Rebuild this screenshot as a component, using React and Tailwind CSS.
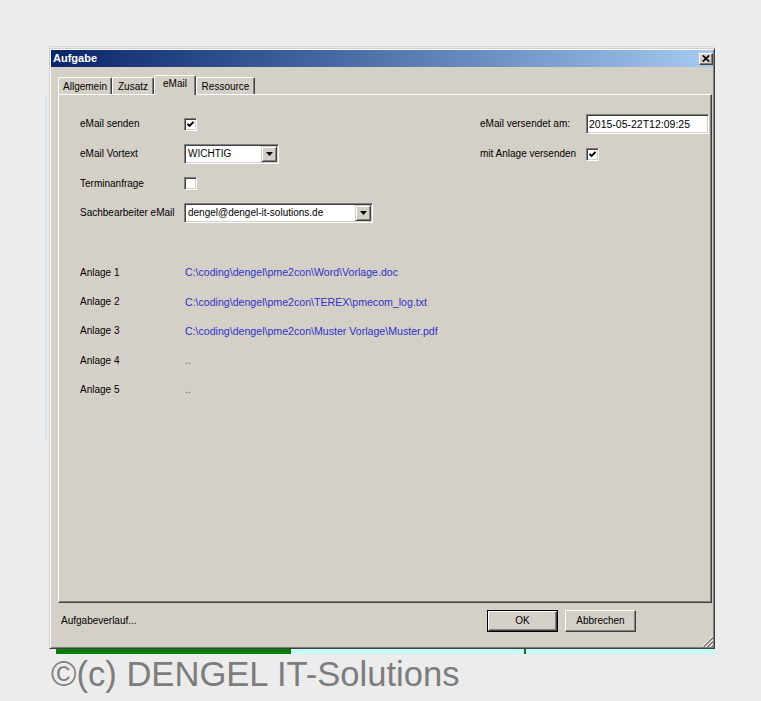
import React from "react";

function Check() {
  return (
    <svg width="7" height="7" viewBox="0 0 7 7">
      <path d="M0.5 2.8 L2.5 4.8 L6.5 0.8" stroke="black" strokeWidth="1.9" fill="none" />
    </svg>
  );
}

function Checkbox({ checked }) {
  return (
    <div className="w-[13px] h-[13px] shrink-0 bg-white border border-t-[#808080] border-l-[#808080] border-r-white border-b-white shadow-[inset_1px_1px_0_#404040,inset_-1px_-1px_0_#d4d0c8] flex items-center justify-center">
      {checked ? <Check /> : null}
    </div>
  );
}

function Arrow() {
  return (
    <svg width="7" height="4" viewBox="0 0 7 4">
      <path d="M0 0 H7 L3.5 4 Z" fill="black" />
    </svg>
  );
}

function Select({ value, width }) {
  return (
    <div
      className={`${width} h-[20px] shrink-0 bg-white border border-t-[#808080] border-l-[#808080] border-r-white border-b-white shadow-[inset_1px_1px_0_#404040,inset_-1px_-1px_0_#d4d0c8] p-px flex`}
    >
      <div className="flex-1 flex items-center pl-[2px] text-[10px] leading-none whitespace-nowrap overflow-hidden">
        {value}
      </div>
      <div className="w-[16px] h-full bg-[#d4d0c8] border border-t-[#d4d0c8] border-l-[#d4d0c8] border-r-[#404040] border-b-[#404040] shadow-[inset_1px_1px_0_#fff,inset_-1px_-1px_0_#808080] flex items-center justify-center">
        <Arrow />
      </div>
    </div>
  );
}

function Tab({ label, width, selected }) {
  if (selected) {
    return (
      <div
        className={`${width} h-[20px] relative z-10 bg-[#d4d0c8] border-t border-l border-t-white border-l-white border-r border-r-[#404040] rounded-t-[2px] shadow-[inset_-1px_0_0_#808080] flex items-center justify-center pb-[4px] text-[10px] leading-none`}
      >
        {label}
      </div>
    );
  }
  return (
    <div
      className={`${width} h-[18px] bg-[#d4d0c8] border-t border-l border-t-white border-l-white border-r border-r-[#404040] rounded-t-[2px] shadow-[inset_-1px_0_0_#808080] flex items-center justify-center text-[10px] leading-none`}
    >
      {label}
    </div>
  );
}

function Button({ label, isDefault }) {
  const inner = (
    <div className="w-full h-full bg-[#d4d0c8] border border-t-white border-l-white border-r-[#404040] border-b-[#404040] shadow-[inset_-1px_-1px_0_#808080] flex items-center justify-center text-[10px] leading-none">
      {label}
    </div>
  );
  if (isDefault) {
    return <div className="w-[71px] h-[22px] border border-black">{inner}</div>;
  }
  return <div className="w-[71px] h-[22px]">{inner}</div>;
}

function Grip() {
  return (
    <svg width="11" height="11" viewBox="0 0 11 11">
      <line x1="11" y1="0" x2="0" y2="11" stroke="#ffffff" />
      <line x1="11" y1="1" x2="1" y2="11" stroke="#808080" />
      <line x1="11" y1="2" x2="2" y2="11" stroke="#808080" />
      <line x1="11" y1="4" x2="4" y2="11" stroke="#ffffff" />
      <line x1="11" y1="5" x2="5" y2="11" stroke="#808080" />
      <line x1="11" y1="6" x2="6" y2="11" stroke="#808080" />
      <line x1="11" y1="8" x2="8" y2="11" stroke="#ffffff" />
      <line x1="11" y1="9" x2="9" y2="11" stroke="#808080" />
      <line x1="11" y1="10" x2="10" y2="11" stroke="#808080" />
    </svg>
  );
}

const anlagen = [
  ["Anlage 1", "C:\\coding\\dengel\\pme2con\\Word\\Vorlage.doc", true],
  ["Anlage 2", "C:\\coding\\dengel\\pme2con\\TEREX\\pmecom_log.txt", true],
  ["Anlage 3", "C:\\coding\\dengel\\pme2con\\Muster Vorlage\\Muster.pdf", true],
  ["Anlage 4", "..", false],
  ["Anlage 5", "..", false],
];

function Dialog() {
  return (
    <div className="w-[666px] h-[601px] shrink-0 bg-[#d4d0c8] border border-t-[#d4d0c8] border-l-[#d4d0c8] border-r-[#404040] border-b-[#404040] shadow-[inset_1px_1px_0_#fff,inset_-1px_-1px_0_#808080] p-px flex flex-col">
      {/* Title bar */}
      <div className="h-[17px] shrink-0 flex items-center justify-between bg-linear-to-r from-[#0a246a] to-[#a6caf0] pl-[2px]">
        <span className="text-white font-bold text-[11px] leading-none">Aufgabe</span>
        <div className="w-[14px] h-[12px] bg-[#d4d0c8] border border-t-white border-l-white border-r-[#404040] border-b-[#404040] shadow-[inset_-1px_-1px_0_#808080] flex items-center justify-center">
          <svg width="8" height="7" viewBox="0 0 8 7">
            <path d="M0.8 0.5 L7.2 6.5 M7.2 0.5 L0.8 6.5" stroke="black" strokeWidth="1.7" />
          </svg>
        </div>
      </div>

      {/* Tabs */}
      <div className="mt-[8px] h-[20px] shrink-0 flex items-end pl-[7px]">
        <Tab label="Allgemein" width="w-[54px]" />
        <Tab label="Zusatz" width="w-[42px]" />
        <Tab label="eMail" width="w-[42px]" selected />
        <Tab label="Ressource" width="w-[59px]" />
      </div>

      {/* Panel */}
      <div className="-mt-px ml-[7px] w-[654px] h-[509px] shrink-0 border border-t-white border-l-white border-r-[#404040] border-b-[#404040] shadow-[inset_-1px_-1px_0_#808080] pt-[14px] pl-[21px] flex flex-col text-[10px] leading-none">
        <div className="h-[30px] flex items-center">
          <div className="w-[400px] flex items-center">
            <div className="w-[104px]">eMail senden</div>
            <Checkbox checked />
          </div>
          <div className="w-[106px]">eMail versendet am:</div>
          <div className="w-[123px] h-[20px] bg-white border border-t-[#808080] border-l-[#808080] border-r-white border-b-white shadow-[inset_1px_1px_0_#404040,inset_-1px_-1px_0_#d4d0c8] flex items-center pl-[2px] text-[10.5px] whitespace-nowrap">
            2015-05-22T12:09:25
          </div>
        </div>
        <div className="h-[30px] flex items-center">
          <div className="w-[400px] flex items-center">
            <div className="w-[104px]">eMail Vortext</div>
            <Select value="WICHTIG" width="w-[95px]" />
          </div>
          <div className="w-[106px]">mit Anlage versenden</div>
          <Checkbox checked />
        </div>
        <div className="h-[29px] flex items-center">
          <div className="w-[104px]">Terminanfrage</div>
          <Checkbox />
        </div>
        <div className="h-[29px] flex items-center">
          <div className="w-[104px] whitespace-nowrap">Sachbearbeiter eMail</div>
          <Select value="dengel@dengel-it-solutions.de" width="w-[189px]" />
        </div>

        <div className="mt-[31px] flex flex-col">
          {anlagen.map(([label, value, link]) => (
            <div key={label} className="h-[29.4px] flex items-center">
              <div className="w-[105px]">{label}</div>
              <div className={link ? "text-[#3030c8] text-[10.6px] whitespace-nowrap" : "text-[#50507a]"}>{value}</div>
            </div>
          ))}
        </div>
      </div>

      {/* Bottom */}
      <div className="flex-1 flex flex-col">
        <div className="pt-[7px] flex items-center pr-[77px]">
          <div className="pl-[10px] text-[10px] leading-none">Aufgabeverlauf...</div>
          <div className="ml-auto flex gap-[7px]">
            <Button label="OK" isDefault />
            <Button label="Abbrechen" />
          </div>
        </div>
        <div className="mt-[4px] h-[11px] flex justify-end">
          <Grip />
        </div>
      </div>
    </div>
  );
}

export default function App() {
  return (
    <div className="w-[761px] h-[701px] bg-[#ececec] overflow-hidden flex flex-col font-['Liberation_Sans',Arial,sans-serif] text-black">
      <div className="h-[46px] shrink-0" />
      <div className="h-[2px] shrink-0 flex">
        <div className="ml-[49px] w-[666px] h-px bg-[#d4d4d4]" />
      </div>
      <div className="flex shrink-0">
        <div className="w-[49px] shrink-0 pt-[47px]">
          <div className="ml-[45px] w-[2px] h-[345px] bg-[#d3e2f2]" />
        </div>
        <Dialog />
      </div>
      <div className="flex h-[5px] shrink-0 pl-[56px]">
        <div className="w-[235px] bg-[#007f00]" />
        <div className="w-[424px] bg-[#c4fbfb] flex">
          <div className="ml-[233px] w-[2px] bg-[#2e5e2e]" />
        </div>
      </div>
      <div className="mt-[3px] ml-[51px] text-[34.6px] leading-[34px] text-[#7d7d7d] whitespace-nowrap">
        ©(c) DENGEL IT-Solutions
      </div>
    </div>
  );
}
